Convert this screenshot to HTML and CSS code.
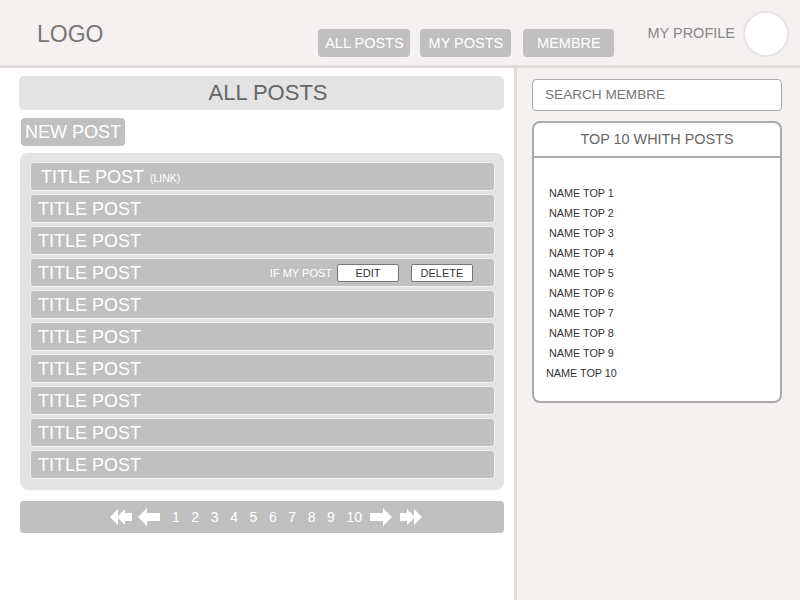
FILE: index.html
```html
<!DOCTYPE html>
<html>
<head>
<meta charset="utf-8">
<link rel="stylesheet" href="styles.css">
</head>
<body>
<header class="top">
  <div class="logo">LOGO</div>
  <nav class="nav">
    <a class="nav-btn wide">ALL POSTS</a>
    <a class="nav-btn">MY POSTS</a>
    <a class="nav-btn">MEMBRE</a>
  </nav>
  <div class="profile">MY PROFILE</div>
  <div class="avatar"></div>
</header>
<main class="main">
  <section class="left">
    <div class="page-title">ALL POSTS</div>
    <div class="new-post">NEW POST</div>
    <div class="post-list">
      <div class="post first">TITLE POST <span class="link">(LINK)</span></div>
      <div class="post">TITLE POST</div>
      <div class="post">TITLE POST</div>
      <div class="post">TITLE POST
        <div class="actions">
          <span class="ifmine">IF MY POST</span>
          <span class="act edit">EDIT</span>
          <span class="act">DELETE</span>
        </div>
      </div>
      <div class="post">TITLE POST</div>
      <div class="post">TITLE POST</div>
      <div class="post">TITLE POST</div>
      <div class="post">TITLE POST</div>
      <div class="post">TITLE POST</div>
      <div class="post">TITLE POST</div>
    </div>
    <div class="pager">
      <svg class="arrow a-first" width="22" height="18" viewBox="0 0 22 18"><polygon points="0,9 8,1 8,17" fill="#fff"/><polygon points="7,9 15,1 15,5 22,5 22,13 15,13 15,17" fill="#fff"/></svg>
      <svg class="arrow a-prev" width="22" height="18" viewBox="0 0 22 18"><polygon points="0,9 9,0 9,5 22,5 22,13 9,13 9,18" fill="#fff"/></svg>
      <div class="nums"><span>1</span><span>2</span><span>3</span><span>4</span><span>5</span><span>6</span><span>7</span><span>8</span><span>9</span><span>10</span></div>
      <svg class="arrow a-next" width="22" height="18" viewBox="0 0 22 18"><polygon points="22,9 13,0 13,5 0,5 0,13 13,13 13,18" fill="#fff"/></svg>
      <svg class="arrow a-last" width="22" height="18" viewBox="0 0 22 18"><polygon points="22,9 14,1 14,17" fill="#fff"/><polygon points="15,9 7,1 7,5 0,5 0,13 7,13 7,17" fill="#fff"/></svg>
    </div>
  </section>
  <aside class="right">
    <div class="search">SEARCH MEMBRE</div>
    <div class="top10">
      <div class="top10-head">TOP 10 WHITH POSTS</div>
      <ul class="names">
        <li>NAME TOP 1</li>
        <li>NAME TOP 2</li>
        <li>NAME TOP 3</li>
        <li>NAME TOP 4</li>
        <li>NAME TOP 5</li>
        <li>NAME TOP 6</li>
        <li>NAME TOP 7</li>
        <li>NAME TOP 8</li>
        <li>NAME TOP 9</li>
        <li class="ten">NAME TOP 10</li>
      </ul>
    </div>
  </aside>
</main>
</body>
</html>
```
FILE: styles.css
```css
* { box-sizing: border-box; }
html, body { margin: 0; padding: 0; }
body {
  width: 800px;
  height: 600px;
  overflow: hidden;
  font-family: "Liberation Sans", Arial, sans-serif;
  background: #ffffff;
  display: flex;
  flex-direction: column;
}
.top {
  height: 68px;
  flex: none;
  background: #f4f1f0;
  border-bottom: 3px solid #dfdcda;
  display: flex;
  align-items: flex-start;
  padding: 0 11px 0 37px;
}
.logo {
  margin-top: 20px;
  font-size: 23px;
  line-height: 28px;
  color: #777777;
}
.nav {
  margin-left: auto;
  margin-top: 29px;
  display: flex;
  gap: 10px;
}
.nav-btn {
  width: 91px;
  height: 28px;
  background: #c0c0c0;
  border-radius: 4px;
  color: #ffffff;
  font-size: 14.5px;
  line-height: 28px;
  text-align: center;
}
.nav-btn.wide { width: 92px; }
.nav-btn + .nav-btn + .nav-btn { margin-left: 2px; }
.profile {
  margin-left: 33px;
  margin-top: 25px;
  font-size: 14.5px;
  line-height: 17px;
  color: #888888;
}
.avatar {
  margin-left: 8px;
  margin-top: 11px;
  width: 46px;
  height: 46px;
  border-radius: 50%;
  background: #ffffff;
  border: 2px solid #e6e4e3;
}
.main {
  flex: 1;
  display: flex;
}
.left {
  width: 517px;
  border-right: 3px solid #dfdcda;
  padding: 8px 10px 0 20px;
  background: #ffffff;
}
.page-title {
  margin-left: -1px;
  height: 34px;
  padding-left: 13px;
  background: #e3e3e3;
  border-radius: 5px;
  color: #666666;
  font-size: 22px;
  line-height: 34px;
  text-align: center;
}
.new-post {
  margin-top: 8px;
  margin-left: 1px;
  display: inline-block;
  height: 28px;
  padding: 0 4px;
  background: #c0c0c0;
  border-radius: 4px;
  color: #ffffff;
  font-size: 18px;
  line-height: 28px;
}
.post-list {
  margin-top: 7px;
  background: #e3e3e3;
  border-radius: 8px;
  padding: 9px 9px 11px 10px;
  display: flex;
  flex-direction: column;
  gap: 3px;
}
.post {
  height: 29px;
  background: #c0c0c0;
  border: 1px solid #f2f2f2;
  border-radius: 4px;
  color: #ffffff;
  font-size: 18px;
  line-height: 28px;
  padding-left: 7px;
  display: flex;
  align-items: center;
}
.post.first { padding-left: 10px; }
.link {
  font-size: 10.5px;
  margin-left: 6px;
  margin-top: 2px;
}
.actions {
  margin-left: auto;
  margin-right: 21px;
  display: flex;
  align-items: center;
}
.ifmine {
  font-size: 11px;
  margin-right: 5px;
}
.act {
  width: 62px;
  height: 18px;
  background: #ffffff;
  border: 1px solid #777777;
  border-radius: 2px;
  color: #333333;
  font-size: 11px;
  line-height: 16px;
  text-align: center;
}
.act.edit { margin-right: 12px; }
.pager {
  margin-top: 11px;
  height: 32px;
  background: #c0c0c0;
  border-radius: 4px;
  display: flex;
  align-items: center;
  justify-content: center;
  padding-left: 8px;
}
.arrow { display: block; flex: none; }
.a-first { margin-right: 6px; }
.a-prev { margin-right: 12px; }
.a-next { margin-left: 8px; margin-right: 8px; }
.nums {
  display: flex;
  gap: 11.6px;
  color: #ffffff;
  font-size: 14px;
  line-height: 18px;
}
.right {
  flex: 1;
  background: #f4f1f0;
  padding: 11px 18px 0 15px;
}
.search {
  height: 32px;
  background: #ffffff;
  border: 1px solid #aaaaaa;
  border-radius: 4px;
  padding-left: 12px;
  color: #777777;
  font-size: 13.6px;
  line-height: 30px;
}
.top10 {
  margin-top: 10px;
  height: 282px;
  background: #ffffff;
  border: 2px solid #aaaaaa;
  border-radius: 8px;
}
.top10-head {
  height: 35px;
  border-bottom: 2px solid #aaaaaa;
  color: #666666;
  font-size: 14.4px;
  line-height: 33px;
  text-align: center;
}
.names {
  list-style: none;
  margin: 0;
  padding: 25px 0 0 15px;
}
.names li {
  height: 20px;
  line-height: 20px;
  font-size: 10.8px;
  color: #333333;
}
.names li.ten { margin-left: -3px; }
```
